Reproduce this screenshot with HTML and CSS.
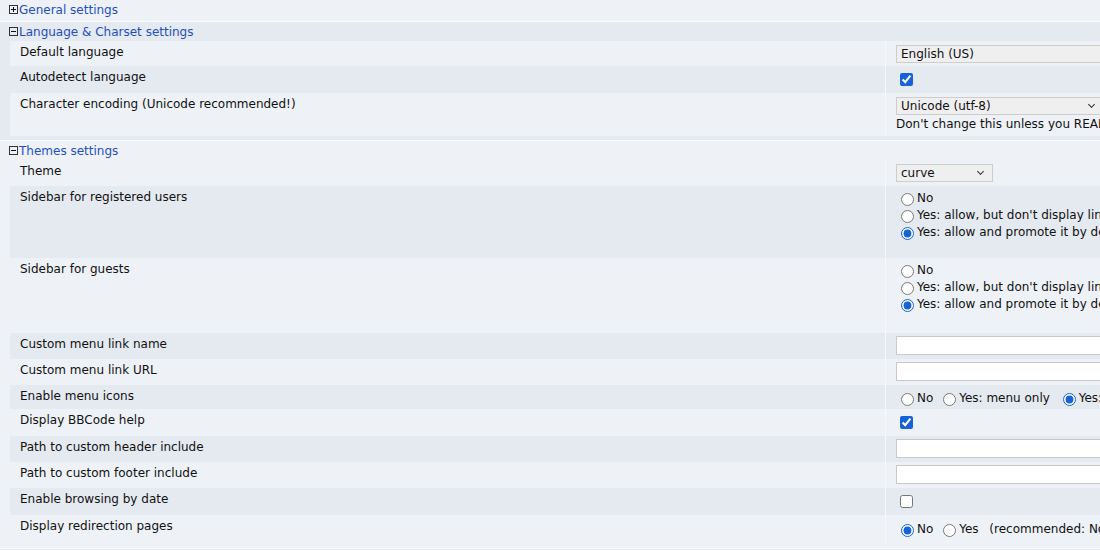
FILE: index.html
```html
<!DOCTYPE html>
<html lang="en">
<head>
    <meta charset="UTF-8">
    <meta name="viewport" content="width=device-width, initial-scale=1.0">
    <title>Board settings</title>
    <link rel="stylesheet" href="styles.css">
</head>
<body>

    <div class="section first">
        <div class="sect-head">
            <svg class="toggle" width="9" height="9" viewBox="0 0 9 9"><rect x="0.5" y="0.5" width="8" height="8" fill="none" stroke="#333"/><path d="M2 4.5h5M4.5 2v5" stroke="#111"/></svg>
            <a href="#">General settings</a>
        </div>
    </div>

    <div class="section shade">
        <div class="sect-head">
            <svg class="toggle" width="9" height="9" viewBox="0 0 9 9"><rect x="0.5" y="0.5" width="8" height="8" fill="none" stroke="#333"/><path d="M2 4.5h5" stroke="#111"/></svg>
            <a href="#">Language &amp; Charset settings</a>
        </div>
        <div class="rows">
            <div class="row">
                <div class="label">Default language</div>
                <div class="value">
                    <span class="dropdown wide"><select><option>English (US)</option></select></span>
                </div>
            </div>
            <div class="row alt">
                <div class="label">Autodetect language</div>
                <div class="value chk"><input type="checkbox" checked></div>
            </div>
            <div class="row">
                <div class="label">Character encoding (Unicode recommended!)</div>
                <div class="value">
                    <span class="dropdown wide arrow"><select><option>Unicode (utf-8)</option></select></span>
                    <div class="hint">Don't change this unless you REALLY know what you are doing</div>
                </div>
            </div>
        </div>
    </div>

    <div class="section last">
        <div class="sect-head">
            <svg class="toggle" width="9" height="9" viewBox="0 0 9 9"><rect x="0.5" y="0.5" width="8" height="8" fill="none" stroke="#333"/><path d="M2 4.5h5" stroke="#111"/></svg>
            <a href="#">Themes settings</a>
        </div>
        <div class="rows">
            <div class="row">
                <div class="label">Theme</div>
                <div class="value sel">
                    <span class="dropdown small arrow"><select><option>curve</option></select></span>
                </div>
            </div>
            <div class="row alt">
                <div class="label">Sidebar for registered users</div>
                <div class="value opts short">
                    <label><input type="radio" name="sb_reg">No</label><br>
                    <label><input type="radio" name="sb_reg">Yes: allow, but don't display link to it in the menu</label><br>
                    <label><input type="radio" name="sb_reg" checked>Yes: allow and promote it by default</label>
                </div>
            </div>
            <div class="row">
                <div class="label">Sidebar for guests</div>
                <div class="value opts">
                    <label><input type="radio" name="sb_guest">No</label><br>
                    <label><input type="radio" name="sb_guest">Yes: allow, but don't display link to it in the menu</label><br>
                    <label><input type="radio" name="sb_guest" checked>Yes: allow and promote it by default</label>
                </div>
            </div>
            <div class="row alt">
                <div class="label">Custom menu link name</div>
                <div class="value field"><input type="text" class="text"></div>
            </div>
            <div class="row">
                <div class="label">Custom menu link URL</div>
                <div class="value field"><input type="text" class="text"></div>
            </div>
            <div class="row alt">
                <div class="label">Enable menu icons</div>
                <div class="value inline">
                    <label><input type="radio" name="icons">No</label>
                    <label><input type="radio" name="icons">Yes: menu only</label>
                    <label><input type="radio" name="icons" checked>Yes: menu and sidebar</label>
                </div>
            </div>
            <div class="row">
                <div class="label">Display BBCode help</div>
                <div class="value chk"><input type="checkbox" checked></div>
            </div>
            <div class="row alt">
                <div class="label">Path to custom header include</div>
                <div class="value field"><input type="text" class="text"></div>
            </div>
            <div class="row">
                <div class="label">Path to custom footer include</div>
                <div class="value field"><input type="text" class="text"></div>
            </div>
            <div class="row alt">
                <div class="label">Enable browsing by date</div>
                <div class="value chk"><input type="checkbox"></div>
            </div>
            <div class="row">
                <div class="label">Display redirection pages</div>
                <div class="value inline tall">
                    <label><input type="radio" name="redirect" checked>No</label>
                    <label><input type="radio" name="redirect">Yes</label>
                    <span class="note">(recommended: No)</span>
                </div>
            </div>
        </div>
    </div>

    <div class="section shade"></div>

</body>
</html>
```

FILE: styles.css
```css
/* page */
html, body {
    overflow: hidden;
}

body {
    margin: 0;
    font-family: "DejaVu Sans", Verdana, sans-serif;
    font-size: 12px;
    color: #111;
    background-color: #eef2f7;
}

/* sections */
.section {
    border-top: 1px solid #fafbfd;
    padding-bottom: 4px;
    background-color: #eef2f7;
}

.section.shade {
    background-color: #e5e9f0;
}

.section.first {
    border-top: none;
    padding-bottom: 2px;
}

.section.last {
    padding-bottom: 2px;
}

.sect-head {
    display: flex;
    align-items: center;
    gap: 1px;
    height: 19px;
    padding-left: 9px;
}

.sect-head a {
    color: #1f4fbf;
    text-decoration: none;
}

.toggle {
    flex: none;
}

/* rows */
.rows {
    margin-left: 10px;
    width: 1500px;
}

.row {
    display: grid;
    grid-template-columns: 876px 614px;
    background-color: #eef2f7;
}

.row.alt {
    background-color: #e5e9f0;
}

.label {
    padding: 4px 10px;
    border-right: 1px solid #f6f8fb;
    line-height: 15px;
}

.value {
    padding: 4px 10px 3px;
    white-space: nowrap;
    line-height: 17px;
}

.value.sel {
    padding-bottom: 4px;
}

.value.chk {
    padding-bottom: 4px;
}

.value.field {
    padding-top: 3px;
    padding-bottom: 4px;
}

.value.opts {
    padding-bottom: 20px;
}

.value.opts.short {
    padding-bottom: 17px;
}

.value.inline {
    padding-top: 5px;
    padding-bottom: 2px;
}

.value.tall {
    padding-top: 6px;
    padding-bottom: 8px;
}

.hint {
    padding-top: 1px;
    line-height: 17px;
}

.note {
    margin-left: 3px;
}

/* controls */
input[type="checkbox"] {
    display: block;
    width: 13px;
    height: 13px;
    margin: 3px 0 3px 4px;
    accent-color: #1662d8;
}

input[type="radio"] {
    width: 13px;
    height: 13px;
    margin: 0 3px 0 5px;
    vertical-align: -4px;
    accent-color: #1662d8;
}

.inline label {
    margin-right: 1px;
}

.inline label + label {
    margin-right: 4px;
}

.text {
    display: block;
    width: 320px;
    height: 19px;
    box-sizing: border-box;
    border: 1px solid #c9c9c9;
    background-color: #fff;
    margin: 0;
    padding: 0 3px;
}

.dropdown {
    position: relative;
    display: inline-block;
    vertical-align: top;
}

.dropdown select {
    appearance: none;
    display: block;
    height: 18px;
    box-sizing: border-box;
    margin: 0;
    padding: 0 4px;
    border: 1px solid #cdcdcd;
    border-radius: 0;
    background-color: #efefef;
    font-family: "DejaVu Sans", Verdana, sans-serif;
    font-size: 12px;
    color: #111;
}

.dropdown.wide select {
    width: 208px;
}

.dropdown.small select {
    width: 97px;
}

.dropdown.arrow::after {
    content: "";
    position: absolute;
    right: 10px;
    top: 5px;
    width: 4px;
    height: 4px;
    border-right: 1.5px solid #333;
    border-bottom: 1.5px solid #333;
    transform: rotate(45deg);
}
```
